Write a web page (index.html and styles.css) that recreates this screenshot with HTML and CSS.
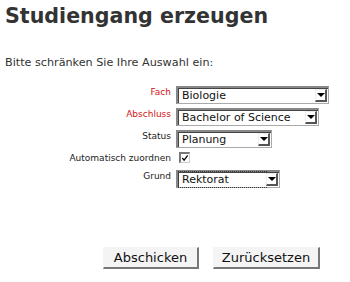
FILE: index.html
```html
<!DOCTYPE html>
<html lang="de">
<head>
<meta charset="utf-8">
<title>Studiengang erzeugen</title>
<link rel="stylesheet" href="styles.css">
</head>
<body>
<h1 class="title">Studiengang erzeugen</h1>
<p class="intro">Bitte schränken Sie Ihre Auswahl ein:</p>
<form class="form">
  <div class="grid">
    <label class="lbl req">Fach</label>
    <div class="select w-fach"><span class="val">Biologie</span><span class="arrow"><span class="tri"></span></span></div>

    <label class="lbl req">Abschluss</label>
    <div class="select w-abschluss"><span class="val">Bachelor of Science</span><span class="arrow"><span class="tri"></span></span></div>

    <label class="lbl">Status</label>
    <div class="select w-status"><span class="val">Planung</span><span class="arrow"><span class="tri"></span></span></div>

    <label class="lbl">Automatisch zuordnen</label>
    <div class="checkrow"><span class="check"><svg width="9" height="9" viewBox="0 0 9 9"><path d="M1.5 4.5 L3.5 7 L7.5 1.5" fill="none" stroke="#000" stroke-width="1.4"/></svg></span></div>

    <label class="lbl">Grund</label>
    <div class="select w-grund focus"><span class="val">Rektorat</span><span class="arrow"><span class="tri"></span></span></div>
  </div>
  <div class="buttons">
    <button type="button" class="btn btn-submit">Abschicken</button>
    <button type="button" class="btn btn-reset">Zurücksetzen</button>
  </div>
</form>
</body>
</html>
```

FILE: styles.css
```css
html, body {
  margin: 0;
  padding: 0;
  background: #fff;
}
body {
  padding: 0 5px;
  font-family: "DejaVu Sans", Verdana, sans-serif;
  color: #333;
}
.title {
  margin: 4px 0 0;
  font-size: 20.6px;
  line-height: 24px;
  font-weight: bold;
  color: #333;
}
.intro {
  margin: 28px 0 0;
  font-size: 11.2px;
  line-height: 13px;
  color: #333;
}
.form {
  margin: 17px 0 0;
}
.grid {
  display: grid;
  grid-template-columns: 166px max-content;
  column-gap: 5px;
  row-gap: 4px;
  align-items: start;
}
.lbl {
  font-size: 9px;
  line-height: 11px;
  text-align: right;
  color: #222;
  padding-top: 1px;
}
.lbl.req {
  color: #d41414;
}
.select {
  box-sizing: border-box;
  height: 18px;
  display: flex;
  align-items: center;
  background: #fff;
  border-top: 2px solid #888;
  border-left: 2px solid #888;
  border-right: 1px solid #aaa;
  border-bottom: 1px solid #aaa;
  box-shadow: inset 1px 1px 0 #444;
}
.w-fach { width: 153px; }
.w-abschluss { width: 143px; }
.w-status { width: 96px; }
.w-grund { width: 104px; }
.val {
  flex: 1;
  padding-left: 4px;
  padding-top: 1px;
  font-size: 11px;
  line-height: 14px;
  color: #111;
  white-space: nowrap;
}
.focus .val {
  outline: 1px dotted #333;
  outline-offset: 0;
  margin-left: 1px;
  padding-left: 3px;
}
.arrow {
  box-sizing: border-box;
  width: 12px;
  height: 13px;
  margin-right: 1px;
  background: #fff;
  border-top: 1px solid #eee;
  border-left: 1px solid #eee;
  border-right: 2px solid #555;
  border-bottom: 2px solid #555;
  display: flex;
  align-items: center;
  justify-content: center;
}
.tri {
  width: 0;
  height: 0;
  border-left: 4px solid transparent;
  border-right: 4px solid transparent;
  border-top: 4px solid #000;
}
.checkrow {
  height: 14px;
  display: flex;
  align-items: flex-start;
  padding-left: 3px;
}
.check {
  box-sizing: border-box;
  width: 11px;
  height: 11px;
  border-top: 2px solid #777;
  border-left: 2px solid #777;
  border-right: 1px solid #ccc;
  border-bottom: 1px solid #ccc;
  background: #fff;
  display: flex;
  align-items: center;
  justify-content: center;
}
.check svg {
  display: block;
  width: 8px;
  height: 8px;
}
.buttons {
  display: flex;
  gap: 14px;
  margin-top: 59px;
  padding-left: 98px;
}
.btn {
  box-sizing: border-box;
  height: 22px;
  margin: 0;
  padding: 0;
  text-align: center;
  font-family: "DejaVu Sans", Verdana, sans-serif;
  font-size: 13px;
  line-height: 18px;
  color: #111;
  background: #f4f4f4;
  border-top: 1px solid #f4f4f4;
  border-left: 1px solid #f4f4f4;
  border-right: 2px solid #777;
  border-bottom: 2px solid #777;
  border-radius: 0;
}
.btn-submit { width: 96px; }
.btn-reset { width: 107px; }
```
